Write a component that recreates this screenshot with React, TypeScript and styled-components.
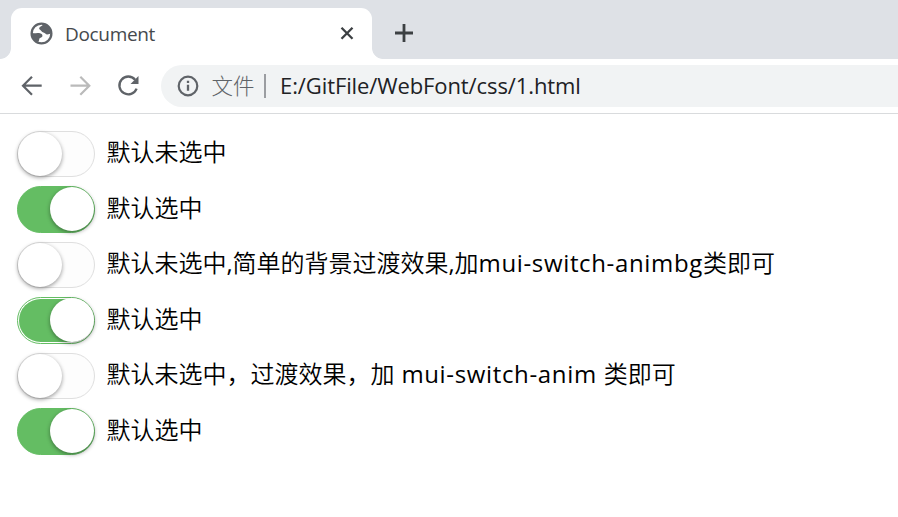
import React from "react";
import styled, { createGlobalStyle } from "styled-components";

const GlobalStyle = createGlobalStyle`
  *, *::before, *::after { box-sizing: border-box; }
  html, body { margin: 0; background: #fff; }
  body { font-family: "Open Sans", "Noto Sans CJK SC", sans-serif; overflow: hidden; }
`;

const Browser = styled.div`
  width: 898px;
  height: 517px;
  display: flex;
  flex-direction: column;
  background: #fff;
  overflow: hidden;
`;

const TabStrip = styled.header`
  height: 59px;
  flex: none;
  display: flex;
  align-items: flex-end;
  background: #dee1e6;
`;

const TabFoot = styled.span<{ $side: "left" | "right" }>`
  width: 11px;
  height: 11px;
  flex: none;
  background: radial-gradient(
    circle at ${(p) => (p.$side === "left" ? "0 0" : "100% 0")},
    transparent 10.5px,
    #fff 11.3px
  );
`;

const Tab = styled.div`
  width: 360.5px;
  height: 51px;
  padding: 0 17.5px 0 18.5px;
  display: flex;
  align-items: center;
  background: #fff;
  border-radius: 11px 11px 0 0;
`;

const TabTitle = styled.span`
  flex: 1;
  margin-left: 12.5px;
  font-size: 19px;
  line-height: 26px;
  letter-spacing: -0.33px;
  color: #45494d;
`;

const IconButton = styled.button<{ $gap?: number }>`
  width: 24px;
  height: 24px;
  flex: none;
  padding: 0;
  margin-left: ${(p) => p.$gap ?? 0}px;
  border: 0;
  background: none;
  display: flex;
  align-items: center;
  justify-content: center;
`;

const NewTab = styled(IconButton)`
  align-self: center;
  margin: 7px 0 0 9.5px;
`;

const Toolbar = styled.nav`
  height: 55px;
  flex: none;
  display: flex;
  align-items: center;
  padding-left: 20px;
  border-bottom: 1px solid #d9dbdd;
`;

const AddressBar = styled.div`
  flex: 1;
  height: 42px;
  margin-left: 21px;
  padding-left: 16px;
  display: flex;
  align-items: center;
  background: #f1f3f4;
  border-radius: 21px 0 0 21px;
  white-space: nowrap;
`;

const Scheme = styled.span`
  margin-left: 12.5px;
  font-size: 21.5px;
  font-family: "Noto Sans CJK SC", sans-serif;
  font-weight: 300;
  line-height: 30px;
  padding-bottom: 2px;
  color: #5f6368;
`;

const Divider = styled.span`
  width: 2px;
  height: 24px;
  margin: 0 14px 0 9.5px;
  background: #9b9da1;
`;

const Url = styled.span`
  font-size: 22px;
  line-height: 30px;
  padding-bottom: 2px;
  letter-spacing: -0.1px;
  color: #202124;
`;

const Page = styled.main`
  padding: 16.9px 0 0 17px;
`;

const Row = styled.label`
  display: flex;
  height: 46.5px;
  margin-bottom: 9px;
  white-space: nowrap;
`;

const Switch = styled.span<{ $on: boolean; $ring: boolean }>`
  position: relative;
  width: 78px;
  height: 46.5px;
  flex: none;
  border: 1px solid ${(p) => (p.$on ? "#64bd63" : "#dfdfdf")};
  border-radius: 30px;
  background: ${(p) => (p.$on ? "#64bd63" : "#fdfdfd")};
  ${(p) => p.$ring && "background-clip: content-box; padding: 1px;"}

  &::before {
    content: "";
    position: absolute;
    top: 0;
    left: ${(p) => (p.$on ? 31.5 : 0)}px;
    width: 44px;
    height: 44px;
    border-radius: 30px;
    background: #fff;
    box-shadow: 0 1.5px 4.5px rgba(0, 0, 0, 0.4);
  }
`;

const Label = styled.span`
  margin: -0.45px 0 0 11.5px;
  font-family: "Noto Sans CJK SC", sans-serif;
  font-size: 24px;
  font-weight: 350;
  line-height: 41px;
  color: #000;
`;

const Latin = styled.span`
  font-family: "Open Sans", sans-serif;
  font-weight: 400;
  letter-spacing: 0.65px;
`;

const Comma = styled(Latin)`
  letter-spacing: -0.2px;
`;

const Globe = () => (
  <svg width="23" height="23" viewBox="0 0 24 24">
    <circle cx="12" cy="12" r="10.3" fill="#fff" stroke="#5f6368" strokeWidth="2.4" />
    <path
      d="M14 2.2C13 4 12 4.4 10.4 5.1 9 5.8 9.5 7.5 10.5 8c1.5.7 1.5 2.5 3.5 3 2 .4 2 2 4 2 1.8 0 2.5-1 4-1A10.3 10.3 0 0 0 14 2.2ZM2 11.5c3 .5 5-.5 7.5 0 2.5.4 3.5 1.5 3.5 3-.1 1.5-1.7 1.5-2.7 2.2-1 .8-.4 2.8-1.8 4.3C4.5 19.5 2 16 2 11.5Z"
      fill="#5f6368"
    />
  </svg>
);

const Close = () => (
  <svg width="14" height="14" viewBox="0 0 14 14">
    <path d="M1.5 .8 12.5 11.8M12.5 .8 1.5 11.8" stroke="#3c4043" strokeWidth="2.3" />
  </svg>
);

const Plus = () => (
  <svg width="20" height="20" viewBox="0 0 20 20">
    <path d="M10 1v18M1 10h18" stroke="#3c4043" strokeWidth="2.8" />
  </svg>
);

const Arrow = ({ color, forward }: { color: string; forward?: boolean }) => (
  <svg width="24" height="24" viewBox="0 0 24 24">
    <path
      d={forward ? "M2.5 11.7H21M12.3 2.7l9 9-9 9" : "M21.7 11.7H3M12 2.7l-9 9 9 9"}
      fill="none"
      stroke={color}
      strokeWidth="2.2"
    />
  </svg>
);

const Reload = () => (
  <svg width="24" height="24" viewBox="0 0 24 24">
    <path d="M19.1 5.7A8.9 8.9 0 1 0 20.6 14.6" fill="none" stroke="#5f6368" strokeWidth="2.3" />
    <path d="M22.5 2v8h-8Z" fill="#5f6368" />
  </svg>
);

const Info = () => (
  <svg width="22" height="22" viewBox="0 0 22 22">
    <circle cx="11" cy="11" r="9.3" fill="none" stroke="#5f6368" strokeWidth="2.2" />
    <path d="M11 9.8v6M11 5.7v2.3" stroke="#5f6368" strokeWidth="2.3" />
  </svg>
);

const rows: { on: boolean; ring?: boolean; text: React.ReactNode }[] = [
  { on: false, text: "默认未选中" },
  { on: true, text: "默认选中" },
  {
    on: false,
    text: (
      <>
        默认未选中<Comma>,</Comma>简单的背景过渡效果<Comma>,</Comma>加<Latin>mui-switch-animbg</Latin>类即可
      </>
    ),
  },
  { on: true, ring: true, text: "默认选中" },
  {
    on: false,
    text: (
      <>
        默认未选中，过渡效果，加<Latin> mui-switch-anim </Latin>类即可
      </>
    ),
  },
  { on: true, text: "默认选中" },
];

export default function App() {
  return (
    <Browser>
      <GlobalStyle />
      <TabStrip>
        <TabFoot $side="left" />
        <Tab>
          <Globe />
          <TabTitle>Document</TabTitle>
          <Close />
        </Tab>
        <TabFoot $side="right" />
        <NewTab aria-label="New tab">
          <Plus />
        </NewTab>
      </TabStrip>
      <Toolbar>
        <IconButton aria-label="Back">
          <Arrow color="#5f6368" />
        </IconButton>
        <IconButton aria-label="Forward" $gap={24}>
          <Arrow color="#bababa" forward />
        </IconButton>
        <IconButton aria-label="Reload" $gap={24}>
          <Reload />
        </IconButton>
        <AddressBar>
          <Info />
          <Scheme>文件</Scheme>
          <Divider />
          <Url>E:/GitFile/WebFont/css/1.html</Url>
        </AddressBar>
      </Toolbar>
      <Page>
        {rows.map((row, i) => (
          <Row key={i}>
            <Switch $on={row.on} $ring={!!row.ring} />
            <Label lang="zh-CN">{row.text}</Label>
          </Row>
        ))}
      </Page>
    </Browser>
  );
}
